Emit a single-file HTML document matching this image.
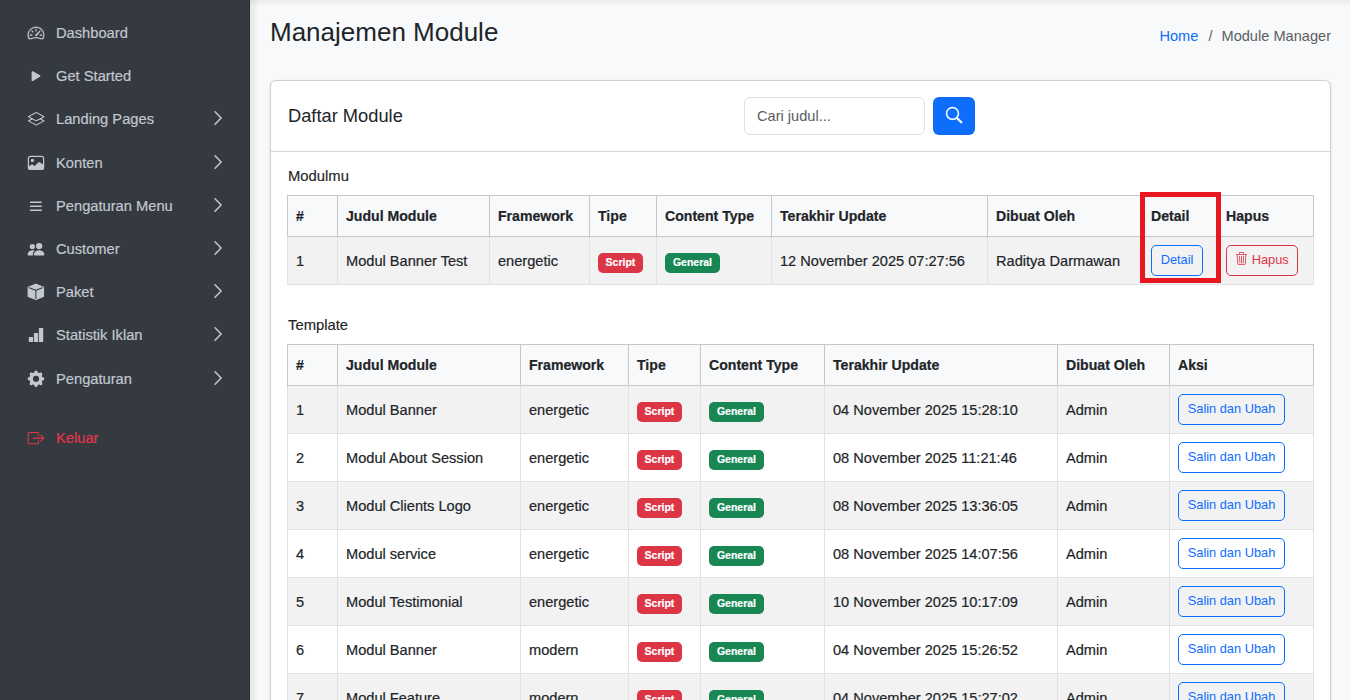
<!DOCTYPE html>
<html><head><meta charset="utf-8">
<style>
*{box-sizing:border-box;margin:0;padding:0}
html,body{width:1350px;height:700px;overflow:hidden}
body{font-family:"Liberation Sans",sans-serif;color:#212529;background:#f8f9fa;position:relative}
.sb{position:absolute;left:0;top:0;width:250px;height:700px;background:#343a40;border-right:1px solid #2b3035}
.ni{position:absolute;left:0;width:250px;height:40px;color:#c2c7d0;font-size:14.7px}
.ni .ic{position:absolute;left:27px;top:0;width:18px;height:18px}
.ni .tx{-webkit-text-stroke:0.2px currentColor;position:absolute;left:56px;top:0;white-space:nowrap;line-height:18px}
.ni .ch{position:absolute;left:212px;top:0;width:12px;height:16px}
.main{position:absolute;left:250px;top:0;width:1100px;height:700px;background:#f8f9fa}
.shl{position:absolute;left:0;top:0;width:10px;height:700px;background:linear-gradient(to right,rgba(0,0,0,.07),rgba(0,0,0,0))}
.sht{position:absolute;left:0;top:0;width:1100px;height:6px;background:linear-gradient(to bottom,rgba(0,0,0,.06),rgba(0,0,0,0))}
h1{position:absolute;left:270px;top:14px;font-size:26px;font-weight:400;line-height:36px;white-space:nowrap;color:#212529}
.bc{position:absolute;right:19px;top:27px;font-size:14.6px;line-height:18px;color:#5b5f63;white-space:nowrap}
.bc a{color:#0d6efd;text-decoration:none}
.bc .sep{padding:0 9px 0 10px;color:#5b5f63}
.card{position:absolute;left:270px;top:80px;width:1061px;height:640px;background:#fff;border:1px solid #cfd1d3;border-radius:6px;box-shadow:0 1px 3px rgba(0,0,0,.12)}
.ch1{position:absolute;left:0;top:0;width:1059px;height:71px;border-bottom:1px solid #d6d8da}
.ct{position:absolute;left:17px;top:23px;font-size:18.3px;line-height:24px;white-space:nowrap}
.inp{position:absolute;left:473px;top:16px;width:181px;height:38px;border:1px solid #dee2e6;border-radius:6px;font-size:14.6px;color:#595c5f;padding-left:12px;line-height:36px}
.sbtn{position:absolute;left:662px;top:16px;width:42px;height:38px;background:#0d6efd;border-radius:6px}
.lbl{-webkit-text-stroke:0.15px currentColor;position:absolute;left:17px;font-size:14.8px;line-height:18px;white-space:nowrap}
table{position:absolute;left:16px;border-collapse:collapse;table-layout:fixed;font-size:14.6px}
th,td{-webkit-text-stroke:0.2px currentColor;border:1px solid #dee2e6;padding:0 8px;text-align:left;white-space:nowrap;vertical-align:middle}
thead th{background:#f8f9fa;border-color:#c6c7c8;font-weight:700;font-size:14.1px;height:41px}
tbody td{height:48px}
tbody tr:nth-child(odd) td{background:#f2f2f2}
.bd{display:inline-block;position:relative;top:2px;font-size:10.5px;font-weight:700;color:#fff;border-radius:5px;height:20px;line-height:18px;padding-bottom:2px;text-align:center;vertical-align:middle}
.bd.r{background:#dc3545;width:45px}
.bd.g{background:#198754;width:55px}
.btn{-webkit-text-stroke:0;display:inline-block;font-size:12.8px;border:1px solid #0d6efd;color:#0d6efd;border-radius:5px;height:31px;line-height:28px;padding-bottom:1px;text-align:center;vertical-align:middle}
.btn.d{width:52px}
.btn.h{width:72px;border-color:#dc3545;color:#dc3545}
.btn.s{width:107px}
.redbox{position:absolute;left:1140px;top:192px;width:81px;height:91px;border:5px solid #e8161f}
</style></head><body>
<div class="sb">
  <div class="ni" style="top:24px"><span class="tx">Dashboard</span></div>
  <div class="ni" style="top:67px"><span class="tx">Get Started</span></div>
  <div class="ni" style="top:110px"><span class="tx">Landing Pages</span></div>
  <div class="ni" style="top:154px"><span class="tx">Konten</span></div>
  <div class="ni" style="top:197px"><span class="tx">Pengaturan Menu</span></div>
  <div class="ni" style="top:240px"><span class="tx">Customer</span></div>
  <div class="ni" style="top:283px"><span class="tx">Paket</span></div>
  <div class="ni" style="top:326px"><span class="tx">Statistik Iklan</span></div>
  <div class="ni" style="top:370px"><span class="tx">Pengaturan</span></div>
  <div class="ni" style="top:429px;color:#e4354a"><span class="tx">Keluar</span></div>
  <svg style="position:absolute;left:0;top:0" width="250" height="700" fill="#c2c7d0">
    <g transform="translate(27.6,24.6) scale(1.05)" stroke="#c2c7d0" stroke-width="0.22"><path d="M8 4a.5.5 0 0 1 .5.5V6a.5.5 0 0 1-1 0V4.5A.5.5 0 0 1 8 4M3.732 5.732a.5.5 0 0 1 .707 0l.915.914a.5.5 0 1 1-.708.708l-.914-.915a.5.5 0 0 1 0-.707M2 10a.5.5 0 0 1 .5-.5h1.586a.5.5 0 0 1 0 1H2.5A.5.5 0 0 1 2 10m9.5 0a.5.5 0 0 1 .5-.5h1.5a.5.5 0 0 1 0 1H12a.5.5 0 0 1-.5-.5m.754-4.246a.39.39 0 0 0-.527-.02L7.547 9.31a.91.91 0 1 0 1.302 1.258l3.434-4.297a.39.39 0 0 0-.029-.518z"/><path fill-rule="evenodd" d="M0 10a8 8 0 1 1 15.547 2.661c-.442 1.253-1.845 1.602-2.932 1.25C11.309 13.488 9.475 13 8 13c-1.474 0-3.31.488-4.615.911-1.087.352-2.49.003-2.932-1.25A8 8 0 0 1 0 10m8-7a7 7 0 0 0-6.603 9.329c.203.575.923.876 1.68.63C4.397 12.533 6.358 12 8 12s3.604.532 4.923.96c.757.245 1.477-.056 1.68-.631A7 7 0 0 0 8 3"/></g>
    <g transform="translate(27.2,67.3) scale(1.1)"><path d="m11.596 8.697-6.363 3.692c-.54.313-1.233-.066-1.233-.697V4.308c0-.63.692-1.01 1.233-.696l6.363 3.692a.802.802 0 0 1 0 1.393"/></g>
    <g transform="translate(27.8,110.4) scale(1.05)"><path d="M8.235 1.559a.5.5 0 0 0-.47 0l-7.5 4a.5.5 0 0 0 0 .882L3.188 8 .264 9.559a.5.5 0 0 0 0 .882l7.5 4a.5.5 0 0 0 .47 0l7.5-4a.5.5 0 0 0 0-.882L12.813 8l2.922-1.559a.5.5 0 0 0 0-.882zm3.515 7.008L14.438 10 8 13.433 1.562 10 4.25 8.567l3.515 1.874a.5.5 0 0 0 .47 0zM8 9.433 1.562 6 8 2.567 14.438 6z"/></g>
    <g><rect x="28.4" y="156.4" width="15.2" height="13" rx="2" fill="none" stroke="#c2c7d0" stroke-width="1.2"/><circle cx="32.4" cy="160.4" r="1.6"/><path d="M28.6 166.4L32 164.3L34.6 165.9L38.9 162.1L43.4 164.4V169.2H28.6Z"/></g>
    <g fill="none" stroke="#c2c7d0" stroke-width="1.6" stroke-linecap="round"><path d="M30.6 202.2H41.2M30.6 206.2H41.2M30.6 210.2H41.2"/></g>
    <g transform="translate(27.6,240.8) scale(1.05)"><path d="M7 14s-1 0-1-1 1-4 5-4 5 3 5 4-1 1-1 1zm4-6a3 3 0 1 0 0-6 3 3 0 0 0 0 6m-5.784 6A2.24 2.24 0 0 1 5 13c0-1.355.68-2.75 1.936-3.72A6.3 6.3 0 0 0 5 9c-4 0-5 3-5 4s1 1 1 1zM4.5 8a2.5 2.5 0 1 0 0-5 2.5 2.5 0 0 0 0 5"/></g>
    <g transform="translate(27.6,283.6) scale(1.03)"><path d="M15.528 2.973a.75.75 0 0 1 .472.696v8.662a.75.75 0 0 1-.472.696l-7.25 2.9a.75.75 0 0 1-.557 0l-7.25-2.9A.75.75 0 0 1 0 12.331V3.669a.75.75 0 0 1 .471-.696L7.443.184l.004-.001.274-.11a.75.75 0 0 1 .558 0l.274.11.004.001zm-1.374.527L8 5.962 1.846 3.5 1 3.839v.4l6.5 2.6v7.922l.5.2.5-.2V6.84l6.5-2.6v-.4l-.846-.339Z"/></g>
    <g><rect x="28.8" y="336.9" width="4.3" height="5.1" rx="0.6"/><rect x="33.9" y="333" width="4.2" height="9" rx="0.6"/><rect x="38.9" y="328" width="4.3" height="14" rx="0.6"/></g>
    <g transform="translate(27.6,370.4) scale(1.05)"><path d="M9.405 1.05c-.413-1.4-2.397-1.4-2.81 0l-.1.34a1.464 1.464 0 0 1-2.105.872l-.31-.17c-1.283-.698-2.686.705-1.987 1.987l.169.311c.446.82.023 1.841-.872 2.105l-.34.1c-1.4.413-1.4 2.397 0 2.81l.34.1a1.464 1.464 0 0 1 .872 2.105l-.17.31c-.698 1.283.705 2.686 1.987 1.987l.311-.169a1.464 1.464 0 0 1 2.105.872l.1.34c.413 1.4 2.397 1.4 2.81 0l.1-.34a1.464 1.464 0 0 1 2.105-.872l.31.17c1.283.698 2.686-.705 1.987-1.987l-.169-.311a1.464 1.464 0 0 1 .872-2.105l.34-.1c1.4-.413 1.4-2.397 0-2.81l-.34-.1a1.464 1.464 0 0 1-.872-2.105l.17-.31c.698-1.283-.705-2.686-1.987-1.987l-.311.169a1.464 1.464 0 0 1-2.105-.872zM8 10.93a2.929 2.929 0 1 1 0-5.86 2.929 2.929 0 0 1 0 5.858z"/></g>
    <g transform="translate(27.7,429.8) scale(1.04)" fill="#e4354a"><path fill-rule="evenodd" d="M10 12.5a.5.5 0 0 1-.5.5h-8a.5.5 0 0 1-.5-.5v-9a.5.5 0 0 1 .5-.5h8a.5.5 0 0 1 .5.5v2a.5.5 0 0 0 1 0v-2A1.5 1.5 0 0 0 9.5 2h-8A1.5 1.5 0 0 0 0 3.5v9A1.5 1.5 0 0 0 1.5 14h8a1.5 1.5 0 0 0 1.5-1.5v-2a.5.5 0 0 0-1 0z"/><path fill-rule="evenodd" d="M15.854 8.354a.5.5 0 0 0 0-.708l-3-3a.5.5 0 0 0-.708.708L14.293 7.5H5.5a.5.5 0 0 0 0 1h8.793l-2.147 2.146a.5.5 0 0 0 .708.708z"/></g>
    <path d="M215 111.8L221.1 118.0L215 124.2" fill="none" stroke="#c2c7d0" stroke-width="1.55" stroke-linecap="round" stroke-linejoin="round"/>
    <path d="M215 155.8L221.1 162.0L215 168.2" fill="none" stroke="#c2c7d0" stroke-width="1.55" stroke-linecap="round" stroke-linejoin="round"/>
    <path d="M215 198.8L221.1 205.0L215 211.2" fill="none" stroke="#c2c7d0" stroke-width="1.55" stroke-linecap="round" stroke-linejoin="round"/>
    <path d="M215 241.8L221.1 248.0L215 254.2" fill="none" stroke="#c2c7d0" stroke-width="1.55" stroke-linecap="round" stroke-linejoin="round"/>
    <path d="M215 284.8L221.1 291.0L215 297.2" fill="none" stroke="#c2c7d0" stroke-width="1.55" stroke-linecap="round" stroke-linejoin="round"/>
    <path d="M215 327.8L221.1 334.0L215 340.2" fill="none" stroke="#c2c7d0" stroke-width="1.55" stroke-linecap="round" stroke-linejoin="round"/>
    <path d="M215 371.8L221.1 378.0L215 384.2" fill="none" stroke="#c2c7d0" stroke-width="1.55" stroke-linecap="round" stroke-linejoin="round"/>
  </svg>
</div>
<div class="main"><div class="shl"></div><div class="sht"></div></div>
<h1>Manajemen Module</h1>
<div class="bc"><a>Home</a><span class="sep">/</span>Module Manager</div>
<div class="card">
  <div class="ch1">
    <div class="ct">Daftar Module</div>
    <div class="inp">Cari judul...</div>
    <div class="sbtn"><svg width="42" height="38" viewBox="0 0 42 38"><circle cx="19.5" cy="16.4" r="5.95" fill="none" stroke="#fff" stroke-width="1.5"/><path d="M23.9 21l4.4 4.3" stroke="#fff" stroke-width="2.3" stroke-linecap="round"/></svg></div>
  </div>
  <div class="lbl" style="top:86px">Modulmu</div>
  <table style="top:114px;width:1027px">
    <colgroup><col style="width:50px"><col style="width:152px"><col style="width:100px"><col style="width:67px"><col style="width:115px"><col style="width:216px"><col style="width:155px"><col style="width:75px"><col style="width:96px"></colgroup>
    <thead><tr><th>#</th><th>Judul Module</th><th>Framework</th><th>Tipe</th><th>Content Type</th><th>Terakhir Update</th><th>Dibuat Oleh</th><th>Detail</th><th>Hapus</th></tr></thead>
    <tbody><tr><td>1</td><td>Modul Banner Test</td><td>energetic</td><td><span class="bd r">Script</span></td><td><span class="bd g">General</span></td><td>12 November 2025 07:27:56</td><td>Raditya Darmawan</td><td><span class="btn d">Detail</span></td><td><span class="btn h"><svg width="11.4" height="13" viewBox="0 0 14 16" fill="#dc3545" style="vertical-align:-1px;margin-right:5px"><path d="M6.5 1h3a.5.5 0 0 1 .5.5v1H6v-1a.5.5 0 0 1 .5-.5M11 2.5v-1A1.5 1.5 0 0 0 9.5 0h-3A1.5 1.5 0 0 0 5 1.5v1H1.5a.5.5 0 0 0 0 1h.538l.853 10.66A2 2 0 0 0 4.885 16h6.23a2 2 0 0 0 1.994-1.84l.853-10.66h.538a.5.5 0 0 0 0-1zm1.958 1-.846 10.58a1 1 0 0 1-.997.92h-6.23a1 1 0 0 1-.997-.92L3.042 3.5zm-7.487 1a.5.5 0 0 1 .528.47l.5 8.5a.5.5 0 0 1-.998.06L5 5.03a.5.5 0 0 1 .47-.53Zm5.058 0a.5.5 0 0 1 .47.53l-.5 8.5a.5.5 0 1 1-.998-.06l.5-8.5a.5.5 0 0 1 .528-.47M8 4.5a.5.5 0 0 1 .5.5v8.5a.5.5 0 0 1-1 0V5a.5.5 0 0 1 .5-.5"/></svg>Hapus</span></td></tr></tbody>
  </table>
  <div class="lbl" style="top:235px">Template</div>
  <table style="top:263px;width:1027px">
    <colgroup><col style="width:50px"><col style="width:183px"><col style="width:108px"><col style="width:72px"><col style="width:124px"><col style="width:233px"><col style="width:112px"><col style="width:144px"></colgroup>
    <thead><tr><th>#</th><th>Judul Module</th><th>Framework</th><th>Tipe</th><th>Content Type</th><th>Terakhir Update</th><th>Dibuat Oleh</th><th>Aksi</th></tr></thead>
    <tbody>
      <tr><td>1</td><td>Modul Banner</td><td>energetic</td><td><span class="bd r">Script</span></td><td><span class="bd g">General</span></td><td>04 November 2025 15:28:10</td><td>Admin</td><td><span class="btn s">Salin dan Ubah</span></td></tr>
      <tr><td>2</td><td>Modul About Session</td><td>energetic</td><td><span class="bd r">Script</span></td><td><span class="bd g">General</span></td><td>08 November 2025 11:21:46</td><td>Admin</td><td><span class="btn s">Salin dan Ubah</span></td></tr>
      <tr><td>3</td><td>Modul Clients Logo</td><td>energetic</td><td><span class="bd r">Script</span></td><td><span class="bd g">General</span></td><td>08 November 2025 13:36:05</td><td>Admin</td><td><span class="btn s">Salin dan Ubah</span></td></tr>
      <tr><td>4</td><td>Modul service</td><td>energetic</td><td><span class="bd r">Script</span></td><td><span class="bd g">General</span></td><td>08 November 2025 14:07:56</td><td>Admin</td><td><span class="btn s">Salin dan Ubah</span></td></tr>
      <tr><td>5</td><td>Modul Testimonial</td><td>energetic</td><td><span class="bd r">Script</span></td><td><span class="bd g">General</span></td><td>10 November 2025 10:17:09</td><td>Admin</td><td><span class="btn s">Salin dan Ubah</span></td></tr>
      <tr><td>6</td><td>Modul Banner</td><td>modern</td><td><span class="bd r">Script</span></td><td><span class="bd g">General</span></td><td>04 November 2025 15:26:52</td><td>Admin</td><td><span class="btn s">Salin dan Ubah</span></td></tr>
      <tr><td>7</td><td>Modul Feature</td><td>modern</td><td><span class="bd r">Script</span></td><td><span class="bd g">General</span></td><td>04 November 2025 15:27:02</td><td>Admin</td><td><span class="btn s">Salin dan Ubah</span></td></tr>
    </tbody>
  </table>
</div>
<div class="redbox"></div>
</body></html>
